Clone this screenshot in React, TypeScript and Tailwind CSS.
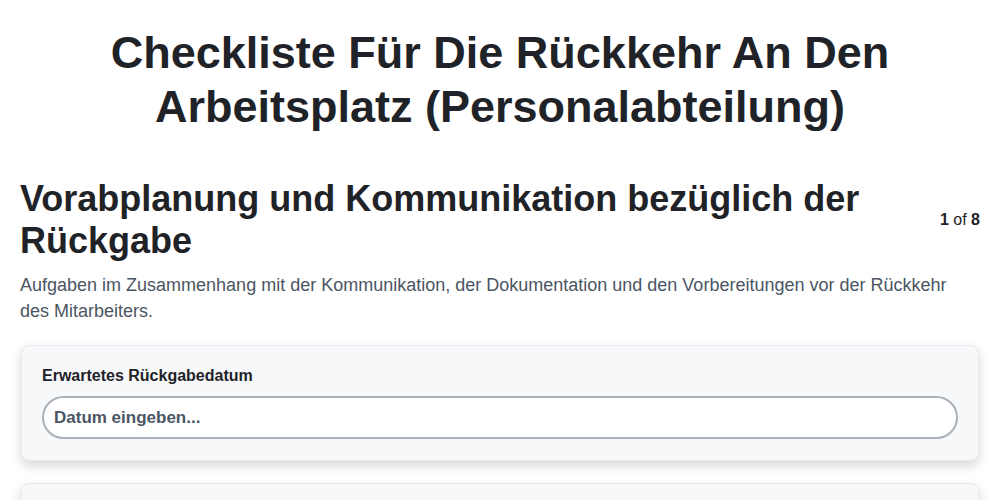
import React from 'react';

export default function App() {
  return (
    <div className="min-h-screen bg-white px-5 pt-[26px] font-['Liberation_Sans',Arial,sans-serif] text-[#1f2328]">
      <h1 className="mx-auto max-w-[820px] text-center text-[45px] font-bold leading-[54px]">
        Checkliste Für Die Rückkehr An Den Arbeitsplatz (Personalabteilung)
      </h1>

      <div className="mt-[44px] flex items-center justify-between gap-6">
        <h2 className="text-[36px] font-bold leading-[42px]">
          Vorabplanung und Kommunikation bezüglich der Rückgabe
        </h2>
        <div className="shrink-0 text-[16px] text-[#1f2328]">
          <span className="font-bold">1</span> of <span className="font-bold">8</span>
        </div>
      </div>

      <p className="mt-[10px] text-[18px] leading-[26px] text-[#4b5563]">
        Aufgaben im Zusammenhang mit der Kommunikation, der Dokumentation und den Vorbereitungen vor der Rückkehr
        des Mitarbeiters.
      </p>

      <div className="mt-[21px] flex flex-col gap-[22px] px-px">
        <div className="rounded-lg border border-[#e8e9ee] bg-[#f7f8fa] px-5 pb-[21px] pt-[20px] shadow-[0_5px_12px_rgba(0,0,0,0.16)]">
          <label className="block text-[16px] font-bold leading-[20px] text-[#1f2328]">Erwartetes Rückgabedatum</label>
          <input
            type="text"
            placeholder="Datum eingeben..."
            className="mt-[10px] h-[43px] w-full rounded-full border-2 border-[#aab1b9] bg-white px-[10px] text-[17px] font-bold text-[#1f2328] outline-none placeholder:text-[#4b5563]"
          />
        </div>
        <div className="h-[60px] rounded-lg border border-[#e8e9ee] bg-[#f7f8fa] shadow-[0_5px_12px_rgba(0,0,0,0.16)]" />
      </div>
    </div>
  );
}
